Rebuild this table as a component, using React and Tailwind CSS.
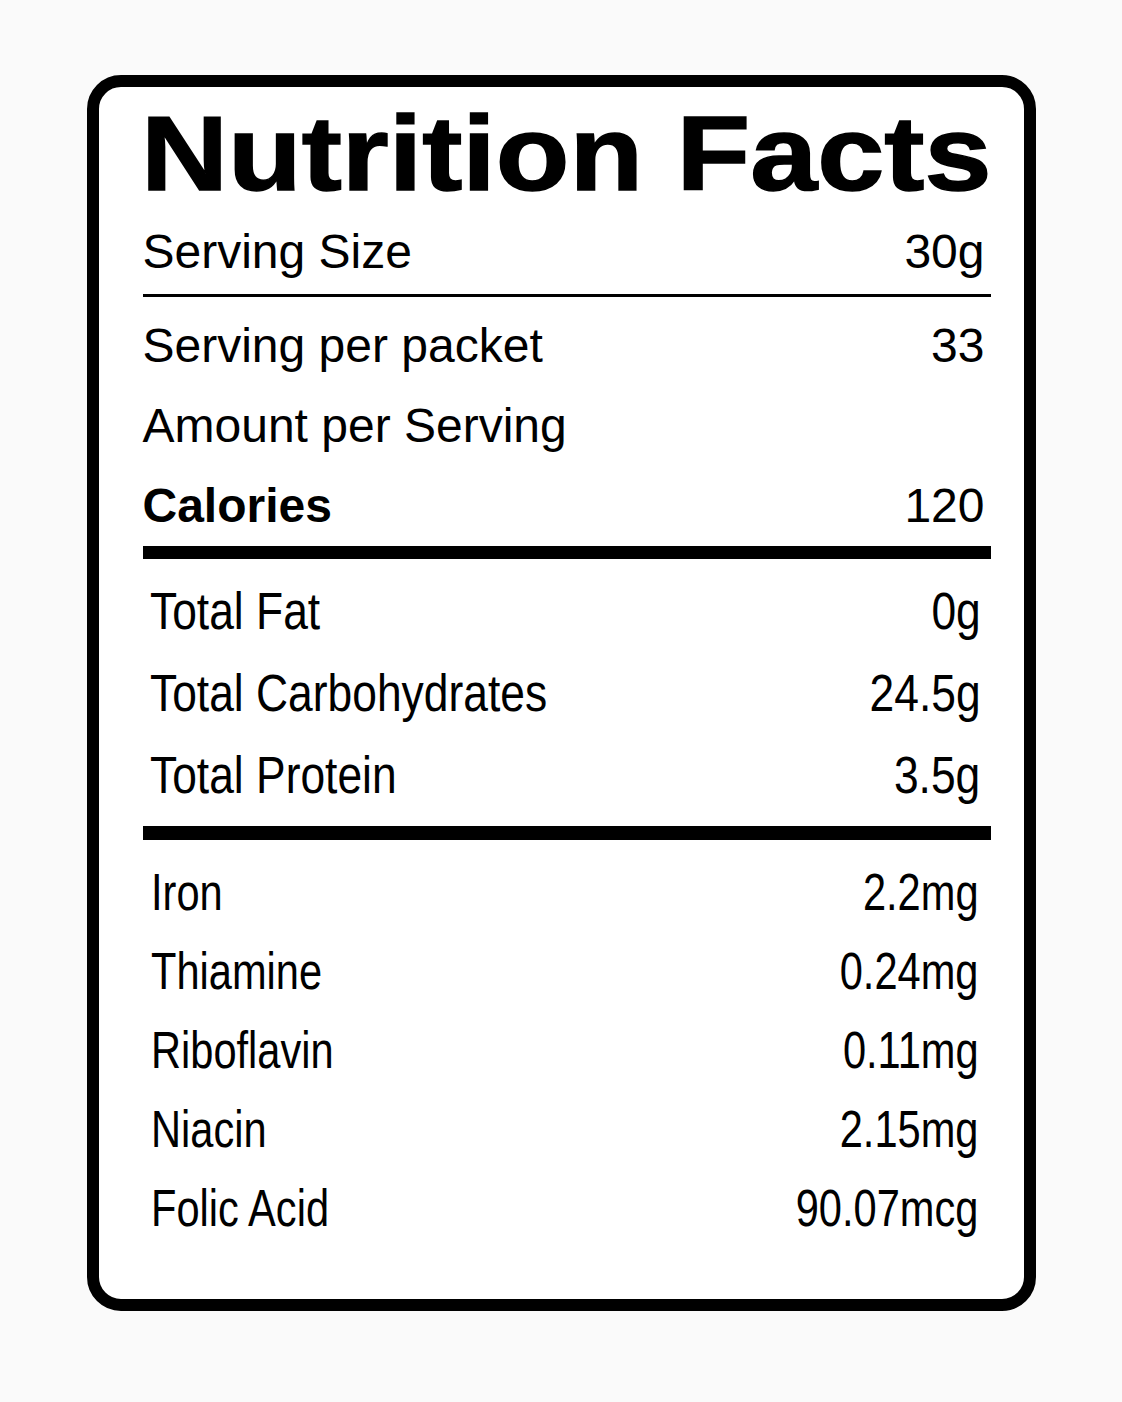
const upper = [
  { label: "Serving per packet", value: "33" },
  { label: "Amount per Serving", value: "" },
  { label: "Calories", value: "120", bold: true },
];

const macros = [
  { label: "Total Fat", value: "0g" },
  { label: "Total Carbohydrates", value: "24.5g" },
  { label: "Total Protein", value: "3.5g" },
];

const vitamins = [
  { label: "Iron", value: "2.2mg" },
  { label: "Thiamine", value: "0.24mg" },
  { label: "Riboflavin", value: "0.11mg" },
  { label: "Niacin", value: "2.15mg" },
  { label: "Folic Acid", value: "90.07mcg" },
];

export default function App() {
  return (
    <div
      className="min-h-[1402px] bg-[#fafafa] pt-[75px] text-black"
      style={{ fontFamily: '"Liberation Sans", Arial, sans-serif' }}
    >
      <div className="mx-auto h-[1236px] w-[949px] rounded-[34px] border-[12px] border-black bg-white pt-[14px] pl-[44px] pr-[33px]">
        {/* title */}
        <h1 className="-ml-[2px] h-[105px] whitespace-nowrap">
          <span className="inline-block origin-left scale-x-[1.148] text-[105px] font-bold leading-[105px] [-webkit-text-stroke:1.5px_black]">
            Nutrition Facts
          </span>
        </h1>

        <div className="mt-[6px] flex h-[80px] items-start justify-between pr-[6px] text-[48px] leading-[80px]">
          <span>Serving Size</span>
          <span>30g</span>
        </div>
        <div className="mt-[2px] h-[3px] bg-black" />

        <div className="mt-[9px]">
          {upper.map((row) => (
            <div
              key={row.label}
              className="flex h-[80px] items-start justify-between pr-[6px] text-[48px] leading-[80px]"
            >
              <span className={row.bold ? "font-bold" : ""}>{row.label}</span>
              <span>{row.value}</span>
            </div>
          ))}
        </div>
        <div className="h-[13px] bg-black" />

        <div className="mt-[12px]">
          {macros.map((row) => (
            <div
              key={row.label}
              className="flex h-[82px] items-start justify-between pl-[7px] pr-[10px] text-[51px] leading-[82px]"
            >
              <span className="origin-left scale-x-[0.87] whitespace-nowrap">{row.label}</span>
              <span className="origin-right scale-x-[0.87] whitespace-nowrap">{row.value}</span>
            </div>
          ))}
        </div>
        <div className="mt-[9px] h-[14px] bg-black" />

        <div className="mt-[13px]">
          {vitamins.map((row) => (
            <div
              key={row.label}
              className="flex h-[79px] items-start justify-between pl-[8px] pr-[12px] text-[52px] leading-[79px]"
            >
              <span className="origin-left scale-x-[0.8] whitespace-nowrap">{row.label}</span>
              <span className="origin-right scale-x-[0.8] whitespace-nowrap">{row.value}</span>
            </div>
          ))}
        </div>
      </div>
    </div>
  );
}
